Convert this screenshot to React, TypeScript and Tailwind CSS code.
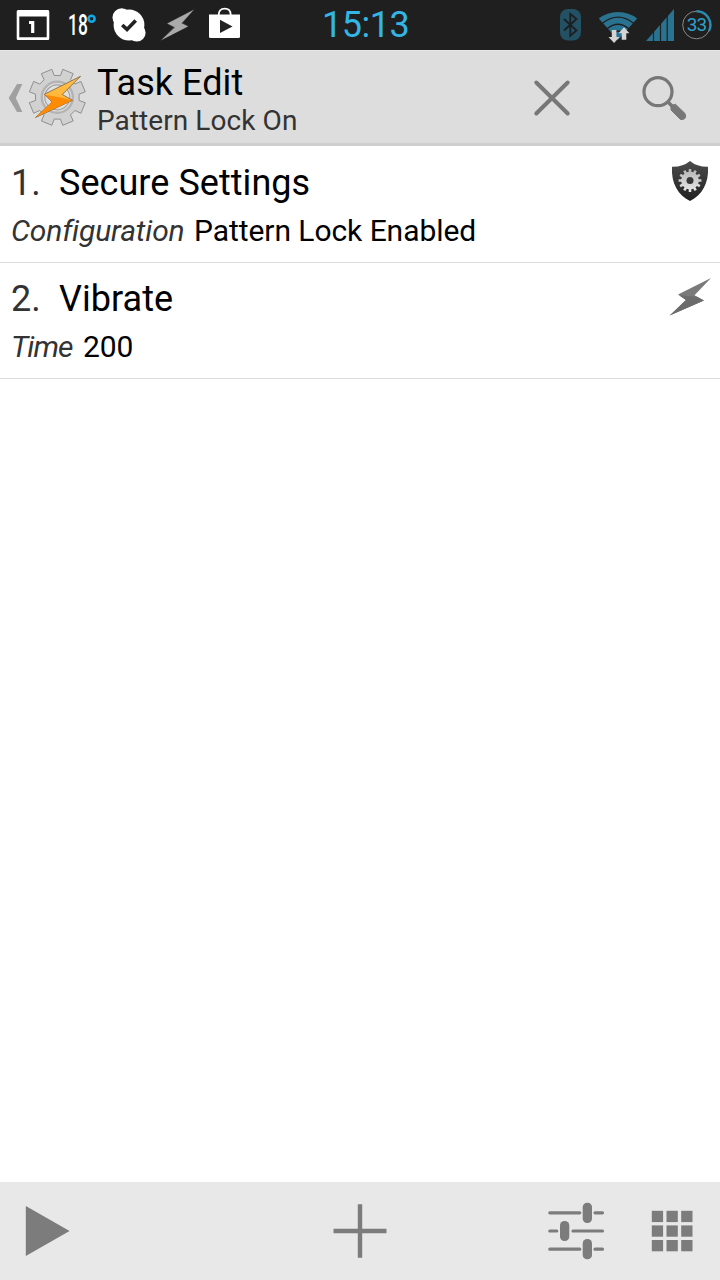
import type { ReactNode } from "react";

function gearPath(cx: number, cy: number, teeth: number, outer: number, inner: number, top: number, base: number, offset: number) {
  const step = (Math.PI * 2) / teeth;
  const points: string[] = [];
  for (let i = 0; i < teeth; i++) {
    const a = i * step + offset;
    const corners: [number, number][] = [
      [a - base, inner],
      [a - top, outer],
      [a + top, outer],
      [a + base, inner],
    ];
    corners.forEach(([t, r]) => points.push(`${(cx + r * Math.cos(t)).toFixed(2)} ${(cy + r * Math.sin(t)).toFixed(2)}`));
  }
  return `M${points.join("L")}Z`;
}

function StatusBar() {
  return (
    <div className="flex h-[50px] shrink-0 items-center bg-[#1f1f1f]">
      <svg className="ml-4 h-[50px] w-[34px] shrink-0" viewBox="16 0 34 50">
        <path fillRule="evenodd" fill="#fff" d="M18 10H48Q49.3 10 49.3 11.5V38.5Q49.3 40 48 40H18Q16.7 40 16.7 38.5V11.5Q16.7 10 18 10ZM19.3 16.5V37.2H46.7V16.5Z" />
        <path d="M29 22.5h3.7V33" fill="none" stroke="#fff" strokeWidth="3.2" />
      </svg>
      <div className="ml-[18px] flex w-[30px] items-center">
        <span className="w-[19px] shrink-0 origin-left scale-x-[0.6] text-[29px] leading-[50px] font-medium text-white">18</span>
        <svg className="h-[50px] w-[10px] shrink-0" viewBox="87 0 10 50">
          <circle cx="91.6" cy="18.7" r="3" fill="none" stroke="#12a8e8" strokeWidth="2.6" />
        </svg>
      </div>
      <svg className="ml-[14px] h-[50px] w-[34px] shrink-0" viewBox="112 0 34 50">
        <circle cx="129" cy="25" r="15.4" fill="#fff" />
        <circle cx="121.7" cy="17.5" r="9.2" fill="#fff" />
        <circle cx="136.800" cy="32.800" r="8.800" fill="#fff" />
        <path d="M122.200 25l4.800 4.400 8.700-9" fill="none" stroke="#222" strokeWidth="3.600" />
      </svg>
      <svg className="ml-[13px] h-[50px] w-[36px] shrink-0" viewBox="159 0 36 50">
        <path d="M194.5 9L182.500 23l6 3-28.500 15L173.500 27.500l-7-4z" fill="#666" opacity=".6" />
        <path d="M193.500 10L181.500 23.200l6.500 3.300L161.500 40 175 27.200l-7.500-3.700z" fill="#aaa" />
      </svg>
      <svg className="ml-[13px] h-[50px] w-[34px] shrink-0" viewBox="208 0 34 50">
        <path d="M209 14.5H240V36.5Q240 38 238.5 38H210.5Q209 38 209 36.5z" fill="#fff" />
        <path d="M218.7 15Q218.7 8.7 224.7 8.7T230.7 15" fill="none" stroke="#fff" strokeWidth="1.8" />
        <path d="M220 19.8V33l12.5-6.6z" fill="#222" />
      </svg>
      <span className="ml-[80px] w-[91px] shrink-0 text-[36px] leading-[50px] tracking-[-0.5px] text-[#33b5e5]">15:13</span>
      <svg className="ml-auto h-[50px] w-[24px] shrink-0" viewBox="558 0 24 50">
        <rect x="560" y="9" width="21" height="31.5" rx="8" fill="#245064" />
        <path d="M564 19l12.5 11.5-6.2 5.3V14l6.2 5L564 30.5" fill="none" stroke="#1a1f22" strokeWidth="1.8" />
      </svg>
      <svg className="ml-[16px] h-[50px] w-[40px] shrink-0" viewBox="598 0 40 50">
        <path d="M618 40L598.8 18.5Q607 12 618 12T637.2 18.5z" fill="#2a7390" />
        <path d="M602.5 23.3Q618 11 633.5 23.3M607 28.8Q618 19.5 629 28.8M612 34Q618 28 624 34" fill="none" stroke="#1f1f1f" strokeWidth="1.4" />
        <path d="M611.8 30h4.6v7h3.1L614.1 43 608.5 37h3.3zM621.7 39.7v-6.5h-3.1l5.4-6 5.4 6h-3.1v6.5z" fill="#d4d4d4" />
      </svg>
      <svg className="ml-[8px] h-[50px] w-[29px] shrink-0" viewBox="646 0 29 50">
        <path d="M646 41L674 9v32z" fill="#2a7390" />
        <path d="M653.5 20V42M660.5 12V42M667.2 8V42" stroke="#1f1f1f" strokeWidth="1.2" />
      </svg>
      <div className="relative mr-[8px] ml-[6px] flex h-[50px] w-[31px] shrink-0 items-center justify-center">
        <svg className="absolute inset-0 h-[50px] w-[31px]" viewBox="681 0 31 50">
          <circle cx="696.5" cy="25" r="13.8" fill="none" stroke="#888" strokeWidth="1" />
          <path d="M696.5 11.2A13.8 13.8 0 0 1 709 31" fill="none" stroke="#2b8cb3" strokeWidth="2.4" />
        </svg>
        <span className="relative text-[19px] leading-[50px] tracking-[-1px] text-[#2f9fca]">33</span>
      </div>
    </div>
  );
}

function TaskerLogo() {
  return (
    <svg className="h-[60px] w-[60px] shrink-0" viewBox="27 67 60 60">
      <defs>
        <linearGradient id="bolt" x1="0" y1="0" x2="0" y2="1">
          <stop offset="0" stopColor="#ffc04a" />
          <stop offset="1" stopColor="#ffae2b" />
        </linearGradient>
      </defs>
      <path d={gearPath(57.3, 97.3, 8, 28.5, 22, 0.2, 0.25, Math.PI / 8)} fill="#d1d1d1" stroke="#909090" strokeWidth="1" strokeLinejoin="round" />
      <circle cx="57.3" cy="97.3" r="15.5" fill="#ddd" stroke="#b3b3b3" strokeWidth="2.4" />
      <circle cx="57.3" cy="97.3" r="12.5" fill="#e0e0e0" stroke="#a2a2a2" strokeWidth="1.2" />
      <path d="M80.5 76.3L62.3 94.5l10.2 5.8-37 17.2L52 102l-7.7-7.7z" fill="url(#bolt)" stroke="#77603e" strokeWidth=".8" />
      <path d="M45 94.7l17 3 10 2.7-36 16.7L52 102z" fill="#ff8b05" />
    </svg>
  );
}

function ActionBar() {
  return (
    <div className="flex h-[96px] shrink-0 border-t border-b-[3px] border-t-[#e7e7e7] border-b-[#cfcfcf] bg-[#dddddd]">
      <svg className="mt-[31px] ml-[8px] h-[32px] w-[15px] shrink-0" viewBox="8 82 15 32">
        <path d="M17 84h5.3L15.8 98l6.5 14H17L8.7 98z" fill="#a0a0a0" />
      </svg>
      <div className="mt-[16px] ml-1"><TaskerLogo /></div>
      <div className="ml-[10px] w-[300px] shrink-0 pt-3">
        <h1 className="text-[36px] leading-[40px] tracking-[0.05px] text-black">Task Edit</h1>
        <p className="text-[28px] leading-[35px] tracking-[0.07px] text-[#333]">Pattern Lock On</p>
      </div>
      <svg className="mt-[27px] ml-[134px] h-[40px] w-[42px] shrink-0" viewBox="531 78 42 40">
        <path d="M536.3 82.5l31.4 31M567.7 82.5l-31.4 31" stroke="#777" strokeWidth="4" strokeLinecap="round" />
      </svg>
      <svg className="mt-[23px] ml-[66px] h-[48px] w-[50px] shrink-0" viewBox="639 74 50 48">
        <circle cx="658" cy="91.7" r="14" fill="none" stroke="#777" strokeWidth="3.2" />
        <path d="M667.5 101.5l5 5" stroke="#777" strokeWidth="3.5" />
        <path d="M671 105.500L675.500 104.300 685 113.500Q687.300 120 680.500 119.500L671 110z" fill="#777" stroke="#777" strokeWidth="1" strokeLinejoin="round" />
      </svg>
    </div>
  );
}

type TaskItemProps = { index: number; name: string; label: string; labelClass: string; value: string; icon: ReactNode };

function TaskItem({ index, name, label, labelClass, value, icon }: TaskItemProps) {
  return (
    <li className="flex h-[116px] justify-between border-b border-[#dedede]">
      <div className="pt-[14px] pl-[11px]">
        <div className="flex text-[36px] leading-[45px]">
          <span className="w-[48px] text-[#333]">{index}.</span>
          <span className="tracking-[0.05px] text-black">{name}</span>
        </div>
        <div className="flex text-[30px] leading-[50px]">
          <span className={`shrink-0 text-[#333] italic ${labelClass}`}>{label}</span>
          <span className="tracking-[-0.06px] text-black">{value}</span>
        </div>
      </div>
      {icon}
    </li>
  );
}

function ShieldIcon() {
  return (
    <svg className="mt-[13px] mr-[10px] h-[42px] w-[40px] shrink-0" viewBox="670 160 40 42">
      <defs>
        <linearGradient id="shield" x1="0" y1="0" x2="0" y2="1">
          <stop offset="0" stopColor="#4c4c4c" />
          <stop offset="1" stopColor="#202020" />
        </linearGradient>
        <linearGradient id="cog" x1="0" y1="0" x2="0" y2="1">
          <stop offset="0" stopColor="#b5b5b5" />
          <stop offset="1" stopColor="#e8e8e8" />
        </linearGradient>
      </defs>
      <path d="M690 161Q697 167 708 166.8C709 183 702 195.5 690 201 678 195.5 671 183 672 166.8Q683 167 690 161z" fill="url(#shield)" />
      <path d={gearPath(690, 180.5, 12, 11.5, 8.8, 0.11, 0.15, Math.PI / 2)} fill="url(#cog)" />
      <circle cx="690" cy="180.5" r="3.5" fill="#383838" />
    </svg>
  );
}

function BoltIcon() {
  return (
    <svg className="mt-[13px] mr-[8px] h-[42px] w-[44px] shrink-0" viewBox="668 276 44 42">
      <path d="M711 278L694.5 295.2l9.5 5.2-34.3 15.2L686 300l-8-5.5z" fill="#7a7a7a" />
      <path d="M679 295.2l18 1.5 7 3.700-34.3 15.2L686 300z" fill="#6c6c6c" />
    </svg>
  );
}

function BottomBar() {
  return (
    <div className="flex h-[98px] shrink-0 items-center bg-[#e8e8e8]">
      <svg className="ml-6 h-[54px] w-[48px] shrink-0" viewBox="24 1204 48 54">
        <path d="M25.8 1206v50L69.6 1231z" fill="#7c7c7c" />
      </svg>
      <svg className="ml-[260px] h-[56px] w-[56px] shrink-0" viewBox="332 1203 56 56">
        <path d="M333.5 1231h53M360 1204.2v53.5" stroke="#7c7c7c" strokeWidth="4.4" />
      </svg>
      <svg className="ml-[158px] h-[60px] w-[60px] shrink-0" viewBox="546 1201 60 60">
        <path d="M549.8 1212.8h30M595 1212.8h7.5M549.8 1231h7M573 1231h29.5M549.8 1249.2h30M595 1249.2h7.5" stroke="#7c7c7c" strokeWidth="3.2" strokeLinecap="round" />
        <rect x="582.7" y="1202.7" width="9.3" height="20.3" rx="4.4" fill="#7c7c7c" />
        <rect x="560" y="1221" width="9.3" height="20" rx="4.4" fill="#7c7c7c" />
        <rect x="582.7" y="1239" width="9.3" height="20.3" rx="4.4" fill="#7c7c7c" />
      </svg>
      <svg className="ml-[45px] h-[44px] w-[44px] shrink-0" viewBox="651 1209 44 44">
        {[652, 666.7, 681.4].map((x) =>
          [1211, 1225.6, 1240.2].map((y) => <rect key={`${x}-${y}`} x={x - 0.2} y={y - 0.200} width="11.300" height="11.300" fill="#7c7c7c" />)
        )}
      </svg>
    </div>
  );
}

export default function App() {
  return (
    <div className="flex h-[1280px] w-[720px] flex-col overflow-hidden bg-white font-['Roboto',sans-serif]">
      <StatusBar />
      <ActionBar />
      <ul className="grow pt-px">
        <TaskItem index={1} name="Secure Settings" label="Configuration" labelClass="w-[183px] tracking-[-0.16px]" value="Pattern Lock Enabled" icon={<ShieldIcon />} />
        <TaskItem index={2} name="Vibrate" label="Time" labelClass="w-[72px] tracking-[-1px]" value="200" icon={<BoltIcon />} />
      </ul>
      <BottomBar />
    </div>
  );
}
